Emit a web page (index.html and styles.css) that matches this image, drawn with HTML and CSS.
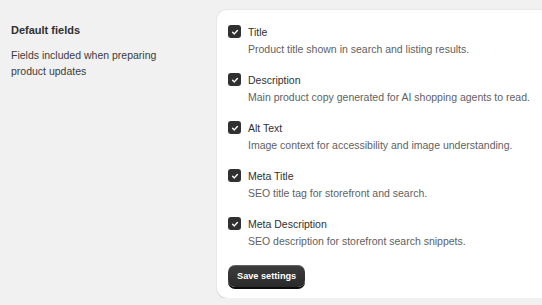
FILE: index.html
```html
<!DOCTYPE html>
<html lang="en">
<head>
    <meta charset="UTF-8">
    <meta name="viewport" content="width=device-width, initial-scale=1.0">
    <title>Default fields</title>
    <link rel="stylesheet" href="styles.css">
</head>
<body>
    <div class="layout">
        <div class="intro">
            <h2 class="intro-title">Default fields</h2>
            <p class="intro-text">Fields included when preparing product updates</p>
        </div>
        <div class="card">
            <div class="field-list">
                <label class="field">
                    <span class="check"><svg viewBox="0 0 12 12" width="12" height="12"><path d="M3.6 6.2l1.7 1.7 3.1-3.4" fill="none" stroke="#fff" stroke-width="1.4" stroke-linecap="round" stroke-linejoin="round"/></svg></span>
                    <span class="field-body">
                        <span class="field-name">Title</span>
                        <span class="field-help">Product title shown in search and listing results.</span>
                    </span>
                </label>
                <label class="field">
                    <span class="check"><svg viewBox="0 0 12 12" width="12" height="12"><path d="M3.6 6.2l1.7 1.7 3.1-3.4" fill="none" stroke="#fff" stroke-width="1.4" stroke-linecap="round" stroke-linejoin="round"/></svg></span>
                    <span class="field-body">
                        <span class="field-name">Description</span>
                        <span class="field-help">Main product copy generated for AI shopping agents to read.</span>
                    </span>
                </label>
                <label class="field">
                    <span class="check"><svg viewBox="0 0 12 12" width="12" height="12"><path d="M3.6 6.2l1.7 1.7 3.1-3.4" fill="none" stroke="#fff" stroke-width="1.4" stroke-linecap="round" stroke-linejoin="round"/></svg></span>
                    <span class="field-body">
                        <span class="field-name">Alt Text</span>
                        <span class="field-help">Image context for accessibility and image understanding.</span>
                    </span>
                </label>
                <label class="field">
                    <span class="check"><svg viewBox="0 0 12 12" width="12" height="12"><path d="M3.6 6.2l1.7 1.7 3.1-3.4" fill="none" stroke="#fff" stroke-width="1.4" stroke-linecap="round" stroke-linejoin="round"/></svg></span>
                    <span class="field-body">
                        <span class="field-name">Meta Title</span>
                        <span class="field-help">SEO title tag for storefront and search.</span>
                    </span>
                </label>
                <label class="field">
                    <span class="check"><svg viewBox="0 0 12 12" width="12" height="12"><path d="M3.6 6.2l1.7 1.7 3.1-3.4" fill="none" stroke="#fff" stroke-width="1.4" stroke-linecap="round" stroke-linejoin="round"/></svg></span>
                    <span class="field-body">
                        <span class="field-name">Meta Description</span>
                        <span class="field-help">SEO description for storefront search snippets.</span>
                    </span>
                </label>
            </div>
            <button class="save-button">Save settings</button>
        </div>
    </div>
</body>
</html>
```

FILE: styles.css
```css
body {
    margin: 0;
    background-color: #f1f1f1;
    font-family: "Liberation Sans", Arial, sans-serif;
    color: #303030;
    overflow: hidden;
}
.layout {
    display: flex;
    align-items: flex-start;
    padding-top: 10px;
    width: 620px;
}
.intro {
    width: 170px;
    padding: 12px 36px 0 11px;
    flex-shrink: 0;
}
.intro-title {
    margin: 0;
    font-size: 11px;
    font-weight: 700;
    line-height: 16px;
}
.intro-text {
    margin: 10px 0 0 0;
    font-size: 10.5px;
    line-height: 15.5px;
    color: #3c3c3c;
}
.card {
    width: 380px;
    background-color: #ffffff;
    border-radius: 10px;
    padding: 14px 11px 11px 11px;
    box-shadow: 0 1px 0 #d4d4d4, 0 0 0 1px #e8e8e8;
}
.field-list {
    display: flex;
    flex-direction: column;
    gap: 15px;
}
.field {
    display: flex;
    align-items: flex-start;
    gap: 7px;
}
.check {
    width: 13px;
    height: 13px;
    margin-top: 1px;
    border-radius: 3px;
    background-color: #303030;
    display: flex;
    align-items: center;
    justify-content: center;
    flex-shrink: 0;
}
.field-body {
    display: flex;
    flex-direction: column;
    gap: 1px;
}
.field-name {
    font-size: 10.5px;
    line-height: 16px;
}
.field-help {
    font-size: 10.5px;
    line-height: 16px;
    color: #616161;
}
.save-button {
    margin-top: 16px;
    height: 22px;
    padding: 0 9px;
    border: none;
    border-radius: 7px;
    font-family: inherit;
    font-size: 9.2px;
    font-weight: 700;
    color: #ffffff;
    background: linear-gradient(#3d3d3d, #2a2a2a);
    box-shadow: inset 0 1px 0 rgba(255, 255, 255, 0.2), 0 2px 0 #0d0d0d;
    cursor: pointer;
}
```
